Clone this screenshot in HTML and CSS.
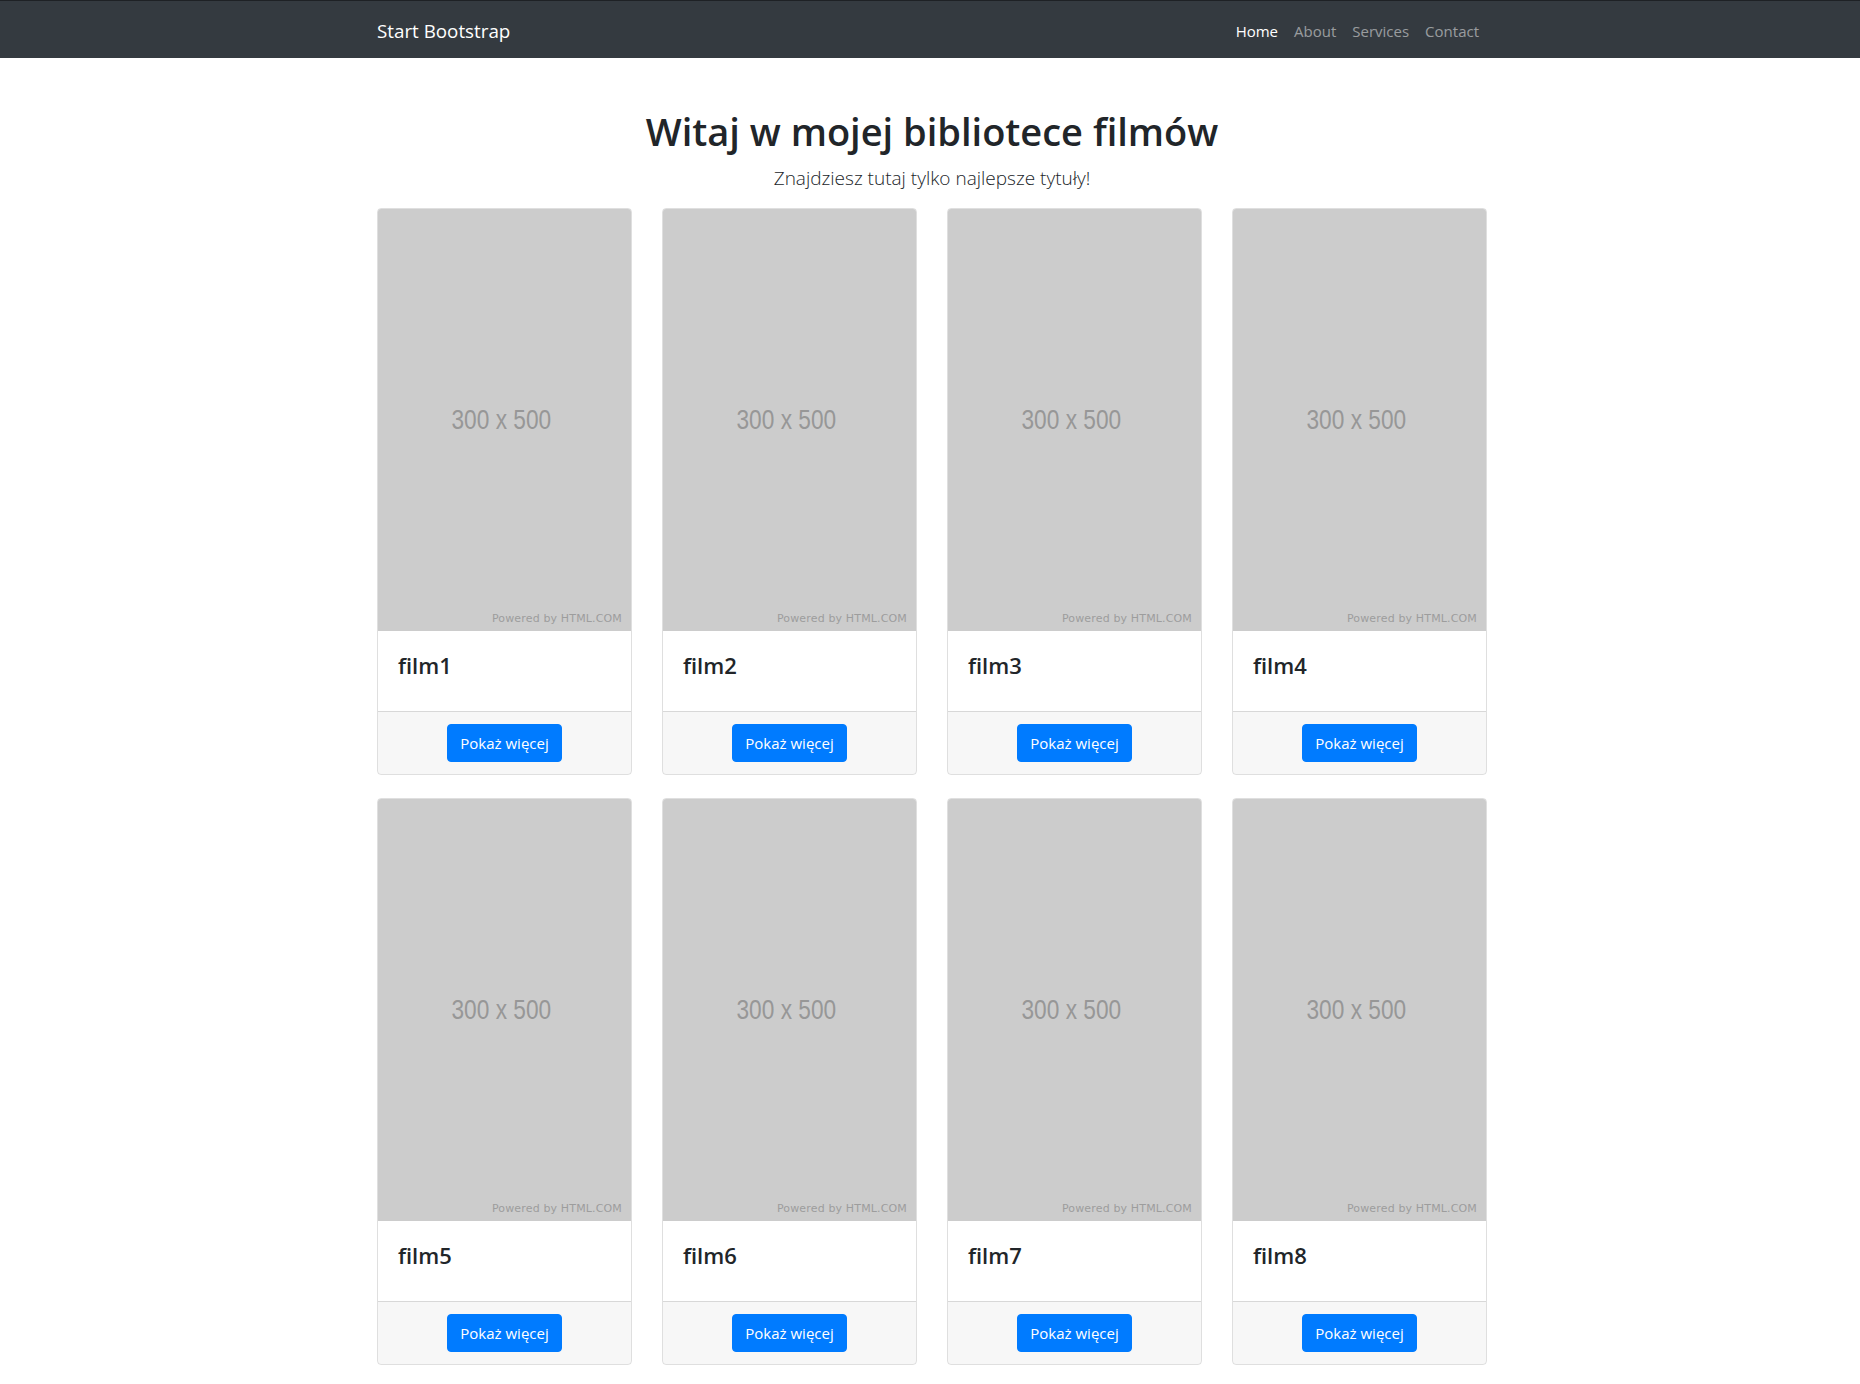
FILE: index.html
```html
<!DOCTYPE html>
<html lang="pl">
<head>
<meta charset="utf-8">
<title>Biblioteka filmów</title>
<link rel="stylesheet" href="styles.css">
</head>
<body>
<nav class="navbar">
  <div class="container navbar-inner">
    <a class="brand" href="#">Start Bootstrap</a>
    <ul class="nav">
      <li><a class="nav-link active" href="#">Home</a></li>
      <li><a class="nav-link" href="#">About</a></li>
      <li><a class="nav-link" href="#">Services</a></li>
      <li><a class="nav-link" href="#">Contact</a></li>
    </ul>
  </div>
</nav>
<main class="container">
  <h1 class="title">Witaj w mojej bibliotece filmów</h1>
  <p class="lead">Znajdziesz tutaj tylko najlepsze tytuły!</p>
  <div class="grid">
    <div class="card">
      <div class="placeholder"><span class="ph-size">300 x 500</span><span class="ph-powered">Powered by HTML.COM</span></div>
      <div class="card-body"><h4 class="card-title">film1</h4></div>
      <div class="card-footer"><a class="btn" href="#">Pokaż więcej</a></div>
    </div>
    <div class="card">
      <div class="placeholder"><span class="ph-size">300 x 500</span><span class="ph-powered">Powered by HTML.COM</span></div>
      <div class="card-body"><h4 class="card-title">film2</h4></div>
      <div class="card-footer"><a class="btn" href="#">Pokaż więcej</a></div>
    </div>
    <div class="card">
      <div class="placeholder"><span class="ph-size">300 x 500</span><span class="ph-powered">Powered by HTML.COM</span></div>
      <div class="card-body"><h4 class="card-title">film3</h4></div>
      <div class="card-footer"><a class="btn" href="#">Pokaż więcej</a></div>
    </div>
    <div class="card">
      <div class="placeholder"><span class="ph-size">300 x 500</span><span class="ph-powered">Powered by HTML.COM</span></div>
      <div class="card-body"><h4 class="card-title">film4</h4></div>
      <div class="card-footer"><a class="btn" href="#">Pokaż więcej</a></div>
    </div>
    <div class="card">
      <div class="placeholder"><span class="ph-size">300 x 500</span><span class="ph-powered">Powered by HTML.COM</span></div>
      <div class="card-body"><h4 class="card-title">film5</h4></div>
      <div class="card-footer"><a class="btn" href="#">Pokaż więcej</a></div>
    </div>
    <div class="card">
      <div class="placeholder"><span class="ph-size">300 x 500</span><span class="ph-powered">Powered by HTML.COM</span></div>
      <div class="card-body"><h4 class="card-title">film6</h4></div>
      <div class="card-footer"><a class="btn" href="#">Pokaż więcej</a></div>
    </div>
    <div class="card">
      <div class="placeholder"><span class="ph-size">300 x 500</span><span class="ph-powered">Powered by HTML.COM</span></div>
      <div class="card-body"><h4 class="card-title">film7</h4></div>
      <div class="card-footer"><a class="btn" href="#">Pokaż więcej</a></div>
    </div>
    <div class="card">
      <div class="placeholder"><span class="ph-size">300 x 500</span><span class="ph-powered">Powered by HTML.COM</span></div>
      <div class="card-body"><h4 class="card-title">film8</h4></div>
      <div class="card-footer"><a class="btn" href="#">Pokaż więcej</a></div>
    </div>
  </div>
</main>
</body>
</html>
```

FILE: styles.css
```css
* { box-sizing: border-box; }
html, body { margin: 0; padding: 0; }
body {
  font-family: "Open Sans", "Noto Sans", "DejaVu Sans", sans-serif;
  font-size: 16px;
  line-height: 1.5;
  color: #212529;
  background: #fff;
}
a { text-decoration: none; }

.container {
  max-width: 1140px;
  margin: 0 auto;
  padding: 0 13px 0 17px;
}

.navbar {
  background: #343a40;
  border-top: 1px solid #1e2125;
  height: 58px;
}
.navbar-inner {
  display: flex;
  align-items: center;
  justify-content: space-between;
  height: 57px;
  padding-top: 3px;
}
.brand {
  color: #fff;
  font-size: 18.8px;
  line-height: 30px;
}
.nav {
  display: flex;
  list-style: none;
  margin: 0;
  padding: 0;
}
.nav-link {
  display: block;
  padding: 8px 8px;
  font-size: 15px;
  color: rgba(255, 255, 255, 0.5);
}
.nav-link.active { color: #fff; }

.title {
  margin: 49px 0 8px;
  text-align: center;
  font-size: 38px;
  font-weight: 600;
  line-height: 48px;
}
.lead {
  margin: 0 0 15px;
  text-align: center;
  font-size: 19px;
  font-weight: 300;
  line-height: 30px;
}

.grid {
  display: grid;
  grid-template-columns: repeat(4, 1fr);
  column-gap: 30px;
  row-gap: 23px;
}
.card {
  border: 1px solid rgba(0, 0, 0, 0.125);
  border-radius: 4px;
  overflow: hidden;
  display: flex;
  flex-direction: column;
}
.placeholder {
  position: relative;
  height: 422px;
  background: #cccccc;
  display: flex;
  align-items: center;
  justify-content: center;
}
.ph-size {
  display: inline-block;
  margin-right: 6px;
  font-family: "Liberation Sans", "Roboto", sans-serif;
  font-size: 27px;
  color: #979797;
  line-height: 1;
  transform: scaleX(0.84);
}
.ph-powered {
  position: absolute;
  right: 9px;
  bottom: 6px;
  font-family: "DejaVu Sans", sans-serif;
  font-size: 11px;
  letter-spacing: 0.15px;
  line-height: 13px;
  color: #9d9d9d;
}
.card-body {
  padding: 20px;
  height: 80px;
}
.card-title {
  margin: 0;
  font-size: 22px;
  font-weight: 600;
  line-height: 28px;
}
.card-footer {
  border-top: 1px solid rgba(0, 0, 0, 0.125);
  background: rgba(0, 0, 0, 0.03);
  padding: 12px 20px;
  text-align: center;
}
.btn {
  display: inline-block;
  padding: 6px 12px;
  border: 1px solid #007bff;
  border-radius: 4px;
  background: #007bff;
  color: #fff;
  font-size: 15px;
  line-height: 24px;
}
```
